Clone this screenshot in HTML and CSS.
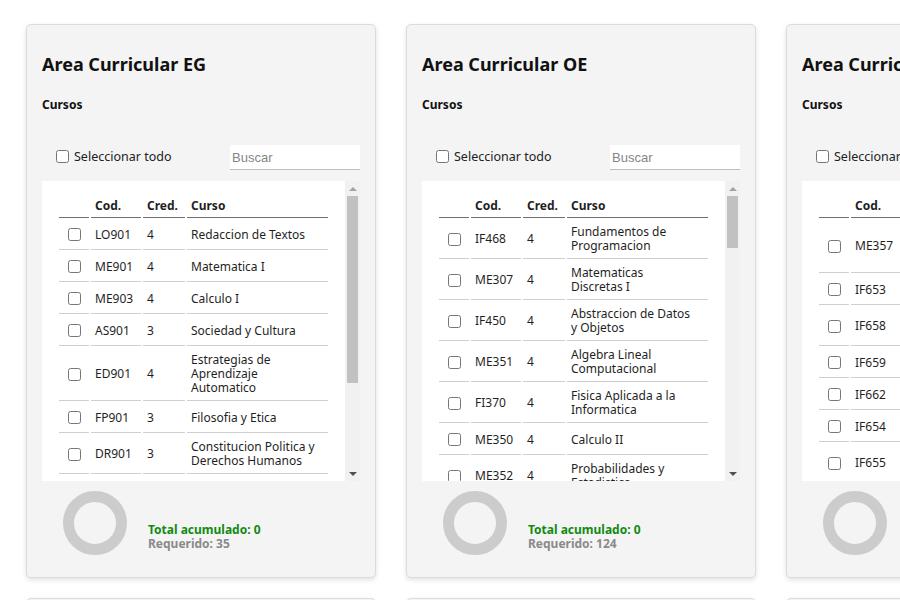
FILE: index.html
```html
<!DOCTYPE html>
<html lang="es">
<head>
<meta charset="utf-8">
<title>Areas Curriculares</title>
<link rel="stylesheet" href="styles.css">
</head>
<body>
<main class="grid">

  <section class="card">
    <h2 class="card-title">Area Curricular EG</h2>
    <h3 class="card-sub">Cursos</h3>
    <div class="toolbar">
      <label class="select-all"><input type="checkbox"><span>Seleccionar todo</span></label>
      <input class="search" type="text" placeholder="Buscar">
    </div>
    <div class="table-wrap">
      <div class="table-scroll">
        <table class="courses">
          <thead><tr><th></th><th>Cod.</th><th>Cred.</th><th>Curso</th></tr></thead>
          <tbody>
            <tr><td><input type="checkbox"></td><td>LO901</td><td>4</td><td>Redaccion de Textos</td></tr>
            <tr><td><input type="checkbox"></td><td>ME901</td><td>4</td><td>Matematica I</td></tr>
            <tr><td><input type="checkbox"></td><td>ME903</td><td>4</td><td>Calculo I</td></tr>
            <tr><td><input type="checkbox"></td><td>AS901</td><td>3</td><td>Sociedad y Cultura</td></tr>
            <tr><td><input type="checkbox"></td><td>ED901</td><td>4</td><td>Estrategias de Aprendizaje Automatico</td></tr>
            <tr><td><input type="checkbox"></td><td>FP901</td><td>3</td><td>Filosofia y Etica</td></tr>
            <tr><td><input type="checkbox"></td><td>DR901</td><td>3</td><td>Constitucion Politica y Derechos Humanos</td></tr>
            <tr><td><input type="checkbox"></td><td>CO901</td><td>3</td><td>Comunicacion Efectiva</td></tr>
            <tr><td><input type="checkbox"></td><td>ME902</td><td>3</td><td>Estadistica General</td></tr>
            <tr><td><input type="checkbox"></td><td>AR901</td><td>2</td><td>Arte y Cultura</td></tr>
            <tr><td><input type="checkbox"></td><td>EF901</td><td>2</td><td>Educacion Fisica</td></tr>
          </tbody>
        </table>
      </div>
      <div class="scrollbar">
        <span class="sb-btn"><span class="arrow-up"></span></span>
        <span class="sb-track"><span class="sb-thumb" style="height:187px"></span></span>
        <span class="sb-btn"><span class="arrow-down"></span></span>
      </div>
    </div>
    <div class="summary">
      <svg class="donut" viewBox="0 0 64 64" width="64" height="64"><circle cx="32" cy="32" r="26.5" fill="none" stroke="#cccccc" stroke-width="11"/></svg>
      <div class="totals">
        <div class="total">Total acumulado: 0</div>
        <div class="required">Requerido: 35</div>
      </div>
    </div>
  </section>

  <section class="card">
    <h2 class="card-title">Area Curricular OE</h2>
    <h3 class="card-sub">Cursos</h3>
    <div class="toolbar">
      <label class="select-all"><input type="checkbox"><span>Seleccionar todo</span></label>
      <input class="search" type="text" placeholder="Buscar">
    </div>
    <div class="table-wrap">
      <div class="table-scroll">
        <table class="courses">
          <thead><tr><th></th><th>Cod.</th><th>Cred.</th><th>Curso</th></tr></thead>
          <tbody>
            <tr><td><input type="checkbox"></td><td>IF468</td><td>4</td><td>Fundamentos de Programacion</td></tr>
            <tr><td><input type="checkbox"></td><td>ME307</td><td>4</td><td>Matematicas Discretas&nbsp;I</td></tr>
            <tr><td><input type="checkbox"></td><td>IF450</td><td>4</td><td>Abstraccion de Datos y&nbsp;Objetos</td></tr>
            <tr><td><input type="checkbox"></td><td>ME351</td><td>4</td><td>Algebra Lineal Computacional</td></tr>
            <tr><td><input type="checkbox"></td><td>FI370</td><td>4</td><td>Fisica Aplicada a la Informatica</td></tr>
            <tr><td><input type="checkbox"></td><td>ME350</td><td>4</td><td>Calculo II</td></tr>
            <tr><td><input type="checkbox"></td><td>ME352</td><td>4</td><td>Probabilidades y Estadistica</td></tr>
            <tr><td><input type="checkbox"></td><td>IF451</td><td>4</td><td>Algoritmos y Estructuras de Datos</td></tr>
            <tr><td><input type="checkbox"></td><td>IF452</td><td>4</td><td>Programacion Orientada a Objetos</td></tr>
            <tr><td><input type="checkbox"></td><td>ME308</td><td>4</td><td>Matematicas Discretas II</td></tr>
            <tr><td><input type="checkbox"></td><td>IF453</td><td>4</td><td>Arquitectura de Computadoras</td></tr>
            <tr><td><input type="checkbox"></td><td>IF454</td><td>4</td><td>Base de Datos I</td></tr>
            <tr><td><input type="checkbox"></td><td>IF455</td><td>4</td><td>Sistemas Operativos</td></tr>
            <tr><td><input type="checkbox"></td><td>IF456</td><td>4</td><td>Analisis y Diseno de Algoritmos</td></tr>
            <tr><td><input type="checkbox"></td><td>IF457</td><td>4</td><td>Ingenieria de Software I</td></tr>
            <tr><td><input type="checkbox"></td><td>IF458</td><td>4</td><td>Redes de Computadoras</td></tr>
            <tr><td><input type="checkbox"></td><td>IF459</td><td>4</td><td>Teoria de la Computacion</td></tr>
            <tr><td><input type="checkbox"></td><td>IF460</td><td>4</td><td>Base de Datos II</td></tr>
            <tr><td><input type="checkbox"></td><td>IF461</td><td>4</td><td>Compiladores</td></tr>
            <tr><td><input type="checkbox"></td><td>IF462</td><td>4</td><td>Ingenieria de Software II</td></tr>
            <tr><td><input type="checkbox"></td><td>IF463</td><td>4</td><td>Inteligencia Artificial</td></tr>
            <tr><td><input type="checkbox"></td><td>IF464</td><td>4</td><td>Computacion Grafica</td></tr>
            <tr><td><input type="checkbox"></td><td>IF465</td><td>4</td><td>Sistemas Distribuidos</td></tr>
            <tr><td><input type="checkbox"></td><td>IF466</td><td>4</td><td>Seguridad Informatica</td></tr>
            <tr><td><input type="checkbox"></td><td>IF467</td><td>4</td><td>Interaccion Humano Computador</td></tr>
            <tr><td><input type="checkbox"></td><td>IF469</td><td>4</td><td>Gestion de Proyectos de Software</td></tr>
            <tr><td><input type="checkbox"></td><td>IF470</td><td>4</td><td>Proyecto de Tesis I</td></tr>
            <tr><td><input type="checkbox"></td><td>IF471</td><td>4</td><td>Proyecto de Tesis II</td></tr>
            <tr><td><input type="checkbox"></td><td>IF472</td><td>4</td><td>Computacion Paralela</td></tr>
            <tr><td><input type="checkbox"></td><td>IF473</td><td>4</td><td>Mineria de Datos</td></tr>
            <tr><td><input type="checkbox"></td><td>IF474</td><td>4</td><td>Etica Profesional</td></tr>
          </tbody>
        </table>
      </div>
      <div class="scrollbar">
        <span class="sb-btn"><span class="arrow-up"></span></span>
        <span class="sb-track"><span class="sb-thumb" style="height:52px"></span></span>
        <span class="sb-btn"><span class="arrow-down"></span></span>
      </div>
    </div>
    <div class="summary">
      <svg class="donut" viewBox="0 0 64 64" width="64" height="64"><circle cx="32" cy="32" r="26.5" fill="none" stroke="#cccccc" stroke-width="11"/></svg>
      <div class="totals">
        <div class="total">Total acumulado: 0</div>
        <div class="required">Requerido: 124</div>
      </div>
    </div>
  </section>

  <section class="card">
    <h2 class="card-title">Area Curricular ES</h2>
    <h3 class="card-sub">Cursos</h3>
    <div class="toolbar">
      <label class="select-all"><input type="checkbox"><span>Seleccionar todo</span></label>
      <input class="search" type="text" placeholder="Buscar">
    </div>
    <div class="table-wrap">
      <div class="table-scroll">
        <table class="courses">
          <thead><tr><th></th><th>Cod.</th><th>Cred.</th><th>Curso</th></tr></thead>
          <tbody>
            <tr><td><input type="checkbox"></td><td>ME357</td><td>4</td><td>Investigacion de<br>Operaciones y<br>Simulacion</td></tr>
            <tr><td><input type="checkbox"></td><td>IF653</td><td>4</td><td>Computacion Movil</td></tr>
            <tr><td><input type="checkbox"></td><td>IF658</td><td>4</td><td>Aprendizaje<br>Automatico</td></tr>
            <tr><td><input type="checkbox"></td><td>IF659</td><td>4</td><td>Vision Artificial</td></tr>
            <tr><td><input type="checkbox"></td><td>IF662</td><td>4</td><td>Robotica</td></tr>
            <tr><td><input type="checkbox"></td><td>IF654</td><td>4</td><td>Cloud Computing</td></tr>
            <tr><td><input type="checkbox"></td><td>IF655</td><td>4</td><td>Procesamiento de<br>Lenguaje Natural</td></tr>
            <tr><td><input type="checkbox"></td><td>IF656</td><td>4</td><td>Big Data</td></tr>
            <tr><td><input type="checkbox"></td><td>IF657</td><td>4</td><td>Internet de las Cosas</td></tr>
          </tbody>
        </table>
      </div>
      <div class="scrollbar">
        <span class="sb-btn"><span class="arrow-up"></span></span>
        <span class="sb-track"><span class="sb-thumb" style="height:190px"></span></span>
        <span class="sb-btn"><span class="arrow-down"></span></span>
      </div>
    </div>
    <div class="summary">
      <svg class="donut" viewBox="0 0 64 64" width="64" height="64"><circle cx="32" cy="32" r="26.5" fill="none" stroke="#cccccc" stroke-width="11"/></svg>
      <div class="totals">
        <div class="total">Total acumulado: 0</div>
        <div class="required">Requerido: 24</div>
      </div>
    </div>
  </section>

  <section class="card">
    <h2 class="card-title">Area Curricular IS</h2>
  </section>
  <section class="card">
    <h2 class="card-title">Area Curricular CB</h2>
  </section>
  <section class="card">
    <h2 class="card-title">Area Curricular EE</h2>
  </section>

</main>
</body>
</html>
```

FILE: styles.css
```css
html, body {
  margin: 0;
  padding: 0;
  background: #ffffff;
  overflow: hidden;
}

body {
  font-family: "Noto Sans", "DejaVu Sans", sans-serif;
  color: #1f1f1f;
  font-size: 12px;
}

.grid {
  display: grid;
  grid-template-columns: repeat(3, 350px);
  column-gap: 30px;
  row-gap: 20px;
  padding: 24px 26px;
  width: max-content;
}

.card {
  box-sizing: border-box;
  height: 554px;
  background: #f4f4f4;
  border: 1px solid #dcdcdc;
  border-radius: 5px;
  box-shadow: 0 2px 5px rgba(0, 0, 0, 0.12);
  padding: 16px 15px;
  display: flex;
  flex-direction: column;
}

.card-title {
  margin: 11px 0 0;
  font-size: 18px;
  line-height: 24px;
  font-weight: 700;
  color: #111;
}

.card-sub {
  margin: 21px 0 0;
  font-size: 12px;
  line-height: 16px;
  font-weight: 700;
  color: #111;
}

.toolbar {
  margin-top: 32px;
  height: 25px;
  display: flex;
  align-items: center;
  justify-content: space-between;
}

.select-all {
  display: flex;
  align-items: center;
  gap: 5px;
  padding-left: 14px;
  margin-top: -3px;
  font-size: 12.5px;
  color: #222;
}

.select-all input {
  margin: 0;
  width: 13px;
  height: 13px;
}

.search {
  box-sizing: border-box;
  width: 130px;
  height: 25px;
  border: none;
  border-bottom: 1px solid #bdbdbd;
  background: #ffffff;
  padding: 0 2px;
  font-family: "Liberation Sans", Arial, sans-serif;
  font-size: 13px;
  color: #222;
  outline: none;
}

.search::placeholder {
  color: #858585;
}

.table-wrap {
  margin-top: 11px;
  height: 300px;
  display: flex;
  background: #ffffff;
}

.table-scroll {
  flex: 1;
  overflow: hidden;
  padding: 10px 0 0 15px;
}

.scrollbar {
  width: 15px;
  background: #f1f1f1;
  display: flex;
  flex-direction: column;
}

.sb-btn {
  height: 15px;
  display: flex;
  align-items: center;
  justify-content: center;
}

.arrow-up {
  width: 0;
  height: 0;
  border-left: 4px solid transparent;
  border-right: 4px solid transparent;
  border-bottom: 4px solid #a3a3a3;
}

.arrow-down {
  width: 0;
  height: 0;
  border-left: 4px solid transparent;
  border-right: 4px solid transparent;
  border-top: 4px solid #505050;
}

.sb-track {
  flex: 1;
  display: flex;
  flex-direction: column;
}

.sb-thumb {
  margin: 0 2px;
  background: #c1c1c1;
}

.courses {
  border-collapse: separate;
  border-spacing: 2px;
  width: 273px;
  table-layout: fixed;
  font-size: 12px;
  line-height: 14px;
  color: #1f1f1f;
}

.courses th,
.courses td {
  box-sizing: border-box;
}

.courses th:nth-child(1) { width: 30px; }
.courses th:nth-child(2) { width: 50px; }
.courses th:nth-child(3) { width: 42px; }

.courses th {
  text-align: left;
  font-weight: 700;
  padding: 6px 4px 4px;
  border-bottom: 1px solid #707070;
}

.courses td {
  padding: 5px 4px;
  vertical-align: middle;
  border-bottom: 1px solid #cfcfcf;
}

.courses td:first-child {
  text-align: center;
  padding: 5px 0;
}

.courses td input {
  margin: 3px 0;
  width: 13px;
  height: 13px;
  vertical-align: middle;
}

.summary {
  margin-top: 10px;
  display: flex;
  align-items: flex-end;
  gap: 21px;
  padding-left: 21px;
}

.donut {
  display: block;
}

.totals {
  margin-bottom: 4px;
  font-size: 12px;
  line-height: 14px;
  font-weight: 700;
}

.total {
  color: #128a12;
}

.required {
  color: #8a8a8a;
}
```
